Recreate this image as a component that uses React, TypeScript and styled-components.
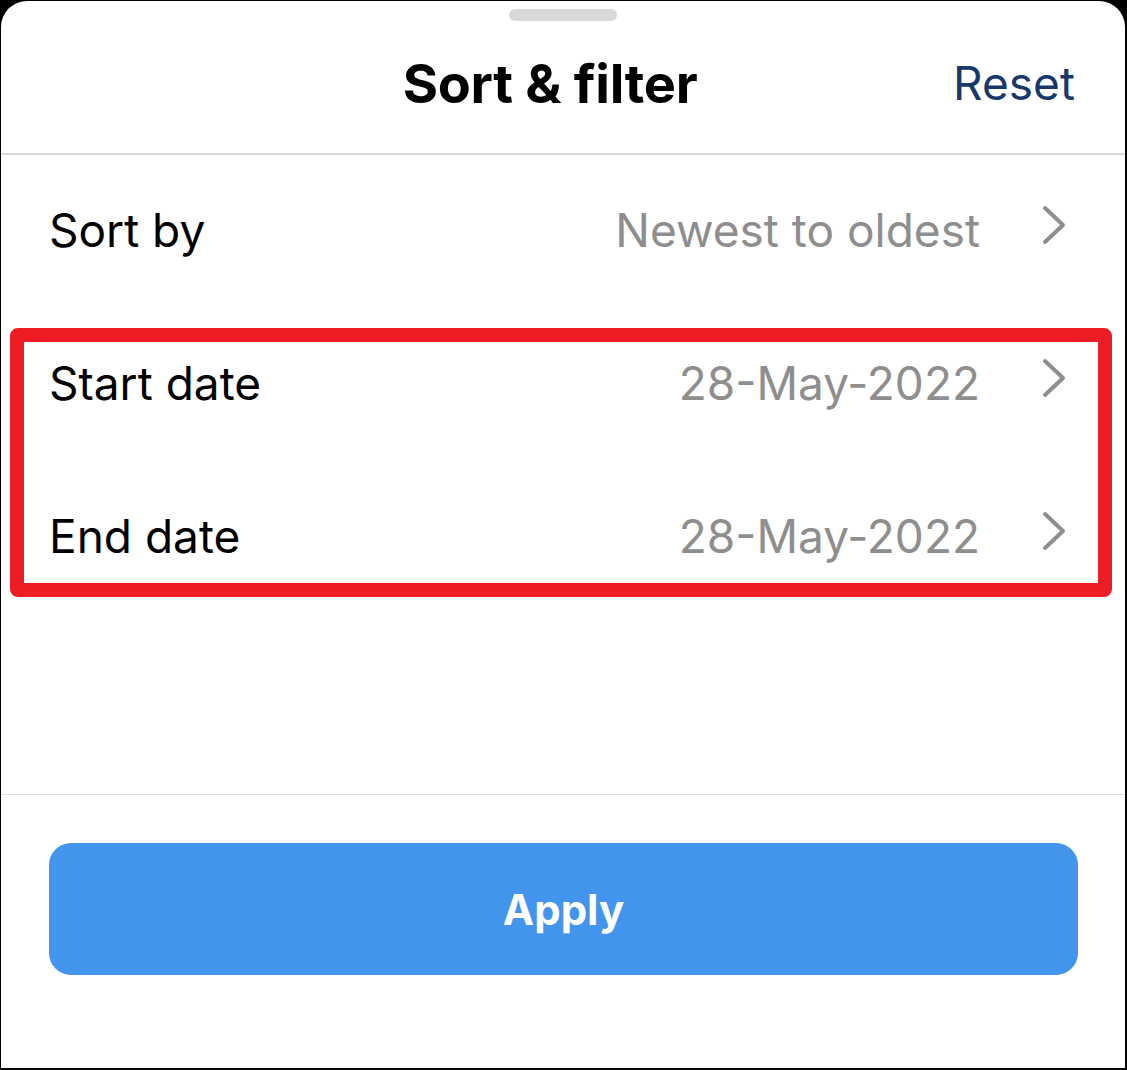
import styled, { createGlobalStyle } from "styled-components";

const GlobalStyle = createGlobalStyle`
  html, body {
    margin: 0;
    padding: 0;
    background: #000;
  }
  body {
    font-family: Inter, "Noto Sans", sans-serif;
    -webkit-font-smoothing: antialiased;
  }
`

const Sheet = styled.div`
  margin: 1px 2px 2px 1px;
  height: 1067px;
  background: #fff;
  border-radius: 26px 26px 0 0;
  display: flex;
  flex-direction: column;
`

const Handle = styled.div`
  align-self: center;
  margin-top: 8px;
  width: 108px;
  height: 12px;
  border-radius: 6px;
  background: #d9d9d9;
`

const Header = styled.div`
  height: 134px;
  display: grid;
  grid-template-columns: 1fr auto 1fr;
  align-items: center;
  padding-bottom: 8px;
  box-sizing: border-box;
  border-bottom: 2px solid #d9d9d9;
`

const Title = styled.h1`
  grid-column: 2;
  margin: 0;
  padding-right: 26px;
  font-size: 54px;
  font-weight: 700;
  color: #000;
  letter-spacing: -0.3px;
`

const ResetButton = styled.button`
  grid-column: 3;
  justify-self: end;
  margin-right: 50px;
  border: none;
  background: none;
  padding: 0;
  font-family: inherit;
  font-size: 46px;
  color: #17386a;
  cursor: pointer;
`

const Row = styled.div`
  height: 153px;
  box-sizing: border-box;
  display: flex;
  align-items: center;
  padding: 0 59px 4px 48px;
`

const Label = styled.span`
  font-size: 46px;
  color: #000;
  flex: 1;
`

const Value = styled.span`
  font-size: 46px;
  color: #8e8e8e;
  margin-right: 62px;
`

const Chevron = styled.svg`
  width: 24px;
  height: 40px;
  margin-top: -10px;
  stroke: #8e8e8e;
  stroke-width: 4;
  stroke-linecap: round;
  stroke-linejoin: round;
  fill: none;
`

const Highlighted = styled.div`
  position: relative;
`

const HighlightFrame = styled.div`
  position: absolute;
  top: 20px;
  bottom: 17px;
  left: 9px;
  right: 13px;
  border: 14px solid #ee1c25;
  border-radius: 8px;
  pointer-events: none;
`

const Spacer = styled.div`
  flex: 1;
`

const Footer = styled.div`
  border-top: 1px solid #dedede;
  padding: 48px 47px 0 48px;
  height: 274px;
  box-sizing: border-box;
`

const ApplyButton = styled.button`
  width: 100%;
  height: 132px;
  border: none;
  border-radius: 22px;
  background: #4394ed;
  color: #fff;
  font-family: inherit;
  font-size: 42px;
  font-weight: 700;
  cursor: pointer;
`

const Arrow = () => (
  <Chevron viewBox="0 0 24 40">
    <polyline points="3,3 21,20 3,37" />
  </Chevron>
)

interface OptionRowProps {
  label: string
  value: string
}

const OptionRow = ({ label, value }: OptionRowProps) => (
  <Row>
    <Label>{label}</Label>
    <Value>{value}</Value>
    <Arrow />
  </Row>
)

export default function App() {
  return (
    <>
      <GlobalStyle />
      <Sheet>
        <Handle />
        <Header>
          <Title>Sort &amp; filter</Title>
          <ResetButton>Reset</ResetButton>
        </Header>
        <OptionRow label="Sort by" value="Newest to oldest" />
        <Highlighted>
          <OptionRow label="Start date" value="28-May-2022" />
          <OptionRow label="End date" value="28-May-2022" />
          <HighlightFrame />
        </Highlighted>
        <Spacer />
        <Footer>
          <ApplyButton>Apply</ApplyButton>
        </Footer>
      </Sheet>
    </>
  )
}
